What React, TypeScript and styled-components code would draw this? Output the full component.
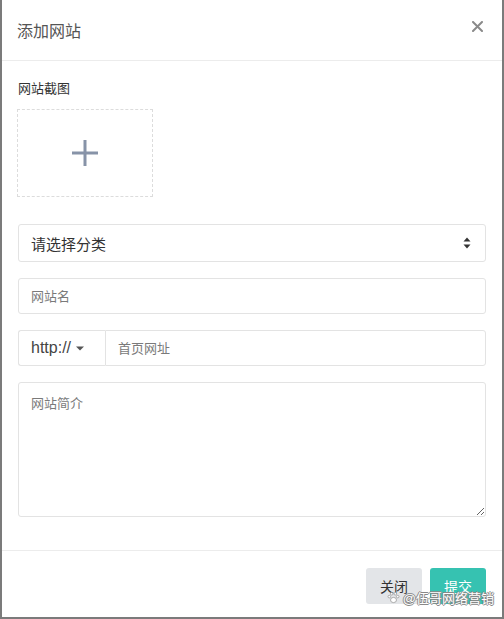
import React from 'react';
import styled, { createGlobalStyle } from 'styled-components';

const GlobalStyle = createGlobalStyle`
  html, body {
    margin: 0;
    padding: 0;
    background: #ffffff;
  }
  * {
    box-sizing: border-box;
  }
`;

const FONT = `"Liberation Sans", "Noto Sans CJK SC", sans-serif`;

const App: React.FC = () => {
  return (
    <>
      <GlobalStyle />
      <Modal>
        <Header>
          <Title>添加网站</Title>
          <CloseButton aria-label="close">
            <svg width="11" height="11" viewBox="0 0 11 11">
              <path d="M1 1 L10 10 M10 1 L1 10" stroke="#8a8a8a" strokeWidth="2" strokeLinecap="round" />
            </svg>
          </CloseButton>
        </Header>

        <Body>
          <Label>网站截图</Label>
          <Upload>
            <svg width="28" height="28" viewBox="0 0 28 28">
              <path d="M14 1 V27 M1 14 H27" stroke="#8793a8" strokeWidth="3" />
            </svg>
          </Upload>

          <Select>
            <span>请选择分类</span>
            <svg width="8" height="12" viewBox="0 0 8 12">
              <path d="M4 0.5 L7.5 4.5 H0.5 Z M4 11.5 L7.5 7.5 H0.5 Z" fill="#333" />
            </svg>
          </Select>

          <Field>
            <Input placeholder="网站名" />
          </Field>

          <Field>
            <InputGroup>
              <Addon>
                http://
                <svg width="8" height="5" viewBox="0 0 8 5">
                  <path d="M0 0.5 H8 L4 4.5 Z" fill="#555" />
                </svg>
              </Addon>
              <Input placeholder="首页网址" $grouped />
            </InputGroup>
          </Field>

          <Textarea placeholder="网站简介" />
        </Body>

        <Footer>
          <Button $variant="default">关闭</Button>
          <Button $variant="primary">提交</Button>
        </Footer>

        <Watermark>
          <svg width="13" height="13" viewBox="0 0 13 13">
            <g fill="#fff" stroke="#999" strokeWidth="0.8">
              <ellipse cx="6.5" cy="9" rx="3" ry="2.6" />
              <circle cx="2.3" cy="5.6" r="1.3" />
              <circle cx="4.7" cy="2.8" r="1.3" />
              <circle cx="8.3" cy="2.8" r="1.3" />
              <circle cx="10.7" cy="5.6" r="1.3" />
            </g>
          </svg>
          @伍哥网络营销
        </Watermark>
      </Modal>
    </>
  );
};

const Modal = styled.div`
  position: relative;
  width: 504px;
  height: 619px;
  display: flex;
  flex-direction: column;
  background: #ffffff;
  border: 2px solid #7b7b7b;
  border-top: none;
  font-family: ${FONT};
  color: #333;
`;

const Header = styled.div`
  height: 61px;
  display: flex;
  align-items: center;
  justify-content: space-between;
  padding: 0 19px 0 15px;
  border-bottom: 1px solid #ececec;
`;

const Title = styled.h4`
  margin: 0;
  font-size: 16px;
  font-weight: normal;
  color: #555;
  padding-bottom: 1px;
`;

const CloseButton = styled.button`
  border: none;
  background: none;
  padding: 0;
  margin-bottom: 8px;
  display: flex;
  cursor: pointer;
`;

const Body = styled.div`
  flex: 1;
  display: flex;
  flex-direction: column;
  padding: 18px 16px 0 16px;
`;

const Label = styled.div`
  font-size: 13px;
  line-height: 20px;
  color: #333;
  margin-bottom: 10px;
`;

const Upload = styled.div`
  width: 136px;
  height: 88px;
  margin-left: -1px;
  border: 1px dashed #dcdcdc;
  display: flex;
  align-items: center;
  justify-content: center;
  margin-bottom: 27px;
`;

const Select = styled.div`
  height: 38px;
  display: flex;
  align-items: center;
  justify-content: space-between;
  padding: 0 14px 0 12px;
  border: 1px solid #e3e3e3;
  border-radius: 3px;
  font-size: 15px;
  color: #333;
  margin-bottom: 16px;
`;

const Field = styled.div`
  margin-bottom: 16px;
`;

const Input = styled.input<{ $grouped?: boolean }>`
  width: 100%;
  height: 36px;
  padding: 0 12px;
  border: 1px solid #e3e3e3;
  border-radius: ${p => (p.$grouped ? '0 3px 3px 0' : '3px')};
  font-family: ${FONT};
  font-size: 13px;
  color: #333;
  outline: none;
  flex: 1;

  &::placeholder {
    color: #7a7a7a;
  }
`;

const InputGroup = styled.div`
  display: flex;
  height: 36px;
`;

const Addon = styled.div`
  width: 87px;
  flex-shrink: 0;
  display: flex;
  align-items: center;
  gap: 5px;
  padding-left: 12px;
  border: 1px solid #e3e3e3;
  border-right: none;
  border-radius: 3px 0 0 3px;
  font-size: 16px;
  color: #444;
`;

const Textarea = styled.textarea`
  height: 135px;
  padding: 10px 12px;
  border: 1px solid #e3e3e3;
  border-radius: 3px;
  font-family: ${FONT};
  font-size: 13px;
  color: #333;
  outline: none;
  resize: vertical;

  &::placeholder {
    color: #7a7a7a;
  }
`;

const Footer = styled.div`
  display: flex;
  justify-content: flex-end;
  gap: 8px;
  padding: 17px 16px 13px 16px;
  border-top: 1px solid #ececec;
`;

const Button = styled.button<{ $variant: 'default' | 'primary' }>`
  width: 56px;
  height: 36px;
  border: none;
  border-radius: 3px;
  font-family: ${FONT};
  font-size: 14px;
  background: ${p => (p.$variant === 'primary' ? '#36c2b1' : '#e3e5e8')};
  color: ${p => (p.$variant === 'primary' ? '#ffffff' : '#333')};
`;

const Watermark = styled.div`
  position: absolute;
  right: 8px;
  bottom: 10px;
  display: flex;
  align-items: center;
  gap: 3px;
  font-size: 13px;
  color: #ffffff;
  text-shadow: -1px 0 #888, 1px 0 #888, 0 -1px #888, 0 1px #888;
  pointer-events: none;
`;

export default App;
